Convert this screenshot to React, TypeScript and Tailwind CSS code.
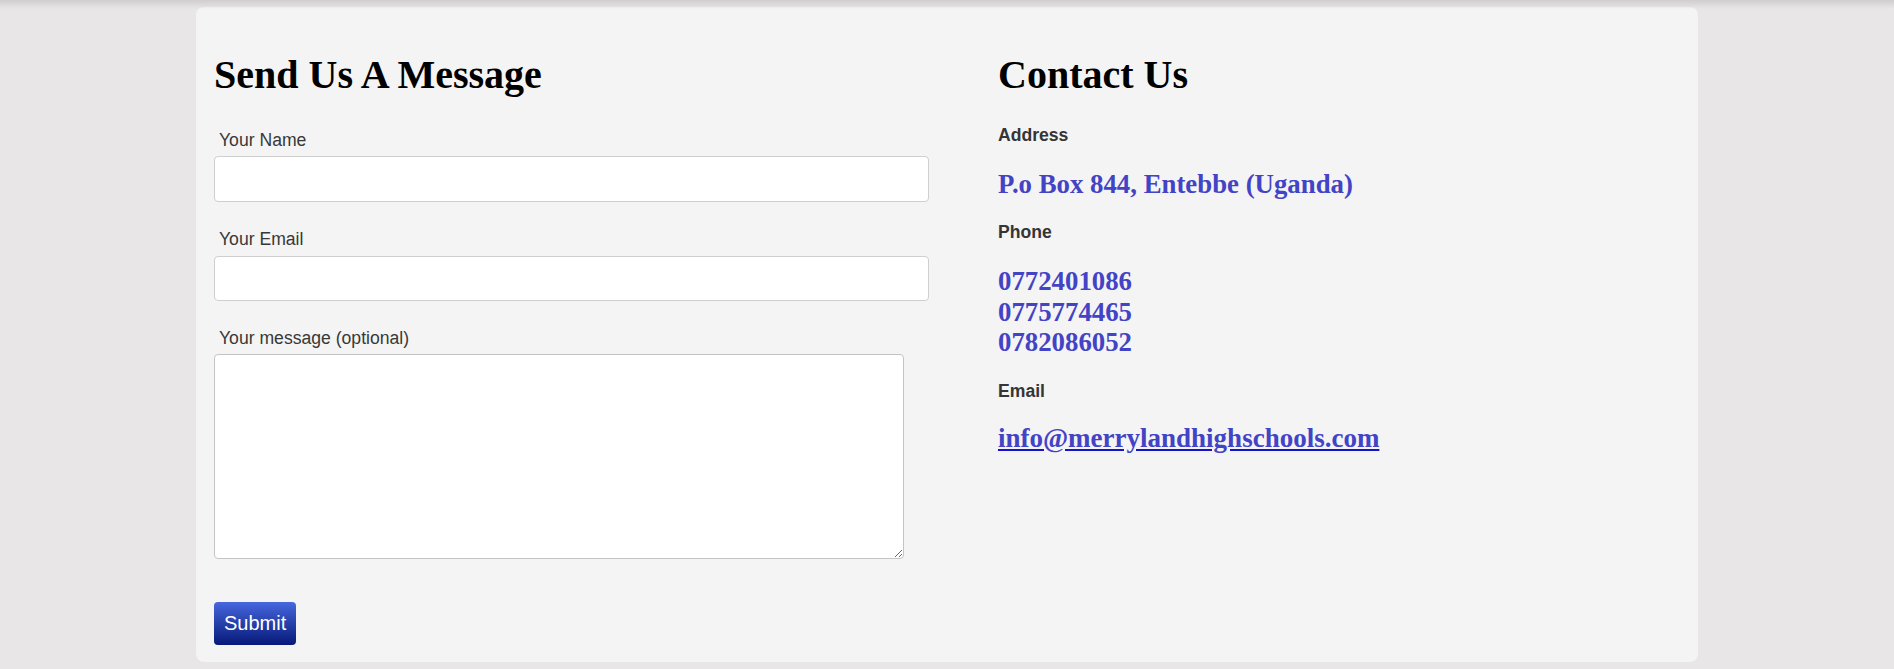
import React, { useState } from 'react';

const sans = "font-['Liberation_Sans',Arial,sans-serif]";
const serif = "font-['Liberation_Serif','Times_New_Roman',serif]";

function Field({ label, children, first }: { label: string; children: React.ReactNode; first?: boolean }) {
  return (
    <div className={first ? 'mt-[33px]' : 'mt-[27px]'}>
      <label className={`${sans} block pl-[5px] text-[17.6px] leading-[20px] text-[#383838]`}>{label}</label>
      {children}
    </div>
  );
}

export default function App() {
  const [name, setName] = useState('');
  const [email, setEmail] = useState('');
  const [message, setMessage] = useState('');

  return (
    <div className="relative min-h-[669px] bg-[#e8e6e7] pt-[7px] pb-[7px]">
      {/* header shadow from the bar above */}
      <div className="pointer-events-none absolute inset-x-0 top-0 h-[9px] bg-linear-to-b from-[#cfcdce] to-transparent" />

      <div className="mx-auto flex w-[1502px] rounded-[8px] bg-[#f4f4f4] pl-[18px] pt-[46px] pb-[17px]">
        {/* form */}
        <div className="w-[784px]">
          <h1 className={`${serif} text-[40px] leading-[44px] font-bold text-black`}>Send Us A Message</h1>

          <Field label="Your Name" first>
            <input
              type="text"
              value={name}
              onChange={(e) => setName(e.target.value)}
              className="mt-[6px] block h-[46px] w-[715px] rounded-[4px] border border-[#cfcfcf] bg-white px-3 outline-none"
            />
          </Field>

          <Field label="Your Email">
            <input
              type="email"
              value={email}
              onChange={(e) => setEmail(e.target.value)}
              className="mt-[7px] block h-[45px] w-[715px] rounded-[4px] border border-[#cfcfcf] bg-white px-3 outline-none"
            />
          </Field>

          <Field label="Your message (optional)">
            <textarea
              value={message}
              onChange={(e) => setMessage(e.target.value)}
              className="mt-[6px] block h-[205px] w-[690px] rounded-[4px] border border-[#c4c4c4] bg-white p-2 outline-none"
            />
          </Field>

          <button
            type="submit"
            className={`${sans} mt-[43px] block h-[43px] rounded-[4px] bg-linear-to-b from-[#4867df] to-[#081879] px-[10px] text-[20px] leading-[23px] text-white`}
          >
            Submit
          </button>
        </div>

        {/* contact details */}
        <div className="flex-1">
          <h1 className={`${serif} text-[40px] leading-[44px] font-bold text-black`}>Contact Us</h1>

          <h4 className={`${sans} mt-[28px] text-[17.6px] leading-[20px] font-bold text-[#353535]`}>Address</h4>
          <p className={`${serif} mt-[24px] text-[26.8px] leading-[30px] font-bold text-[#4343c6]`}>
            P.o Box 844, Entebbe (Uganda)
          </p>

          <h4 className={`${sans} mt-[23px] text-[17.6px] leading-[20px] font-bold text-[#353535]`}>Phone</h4>
          <div className={`${serif} mt-[24px] text-[26.8px] leading-[30.5px] font-bold text-[#4343c6]`}>
            <p>0772401086</p>
            <p>0775774465</p>
            <p>0782086052</p>
          </div>

          <h4 className={`${sans} mt-[23px] text-[17.6px] leading-[20px] font-bold text-[#353535]`}>Email</h4>
          <a
            href="mailto:info@merrylandhighschools.com"
            className={`${serif} mt-[22px] inline-block text-[27px] leading-[30px] font-bold text-[#4343c6] underline decoration-[#1414cc]`}
          >
            info@merrylandhighschools.com
          </a>
        </div>
      </div>
    </div>
  );
}
